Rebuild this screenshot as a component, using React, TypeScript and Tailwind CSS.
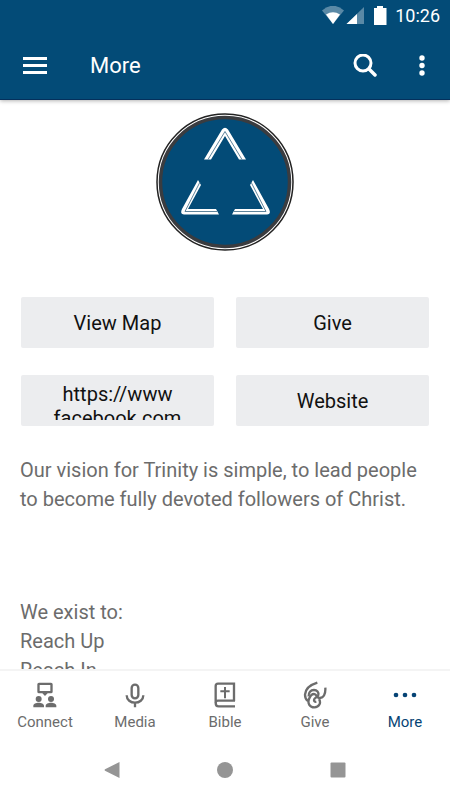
import type { ReactNode } from 'react';
import clsx from 'clsx';

interface NavItem {
  label: string;
  icon: ReactNode;
  active?: boolean;
}

const navItems: NavItem[] = [
  { label: 'Connect', icon: <ConnectIcon /> },
  { label: 'Media', icon: <MicIcon /> },
  { label: 'Bible', icon: <BibleIcon /> },
  { label: 'Give', icon: <GiveIcon /> },
  { label: 'More', icon: <DotsIcon />, active: true },
];

const links = ['View Map', 'Give', 'https://www facebook.com', 'Website'];

function ConnectIcon() {
  return (
    <svg className="h-7 w-6" viewBox="0 0 72 84" fill="currentColor">
      <path
        fillRule="evenodd"
        d="M18 5h36a5 5 0 0 1 5 5v22a5 5 0 0 1-5 5H44l-8 8-8-8H18a5 5 0 0 1-5-5V10a5 5 0 0 1 5-5zm2 7v18h32V12z"
      />
      <circle cx="17" cy="54" r="9" />
      <circle cx="54" cy="54" r="9" />
      <path d="M1 79v-5c0-6 8-9 16-9s16 3 16 9v5zM38 79v-5c0-6 8-9 16-9s16 3 16 9v5z" />
    </svg>
  );
}

function MicIcon() {
  return (
    <svg className="h-7 w-6" viewBox="0 0 72 84" fill="none" stroke="currentColor" strokeWidth="7">
      <rect x="26" y="11" width="20" height="41" rx="10" />
      <path d="M11 43c0 14 12 22 25 22s25-8 25-22M36 65v14" />
    </svg>
  );
}

function BibleIcon() {
  return (
    <svg className="h-7 w-6" viewBox="0 0 72 84" fill="none" stroke="currentColor" strokeWidth="7">
      <path d="M66 59H15a7 7 0 0 0-7 7V15a7 7 0 0 1 7-7h48v52" />
      <path d="M8 65c0 7 3 11 9 11h49" />
      <path d="M36 18v34M22 31h28" strokeWidth="6" />
    </svg>
  );
}

function GiveIcon() {
  return (
    <svg className="h-7 w-6" viewBox="0 0 72 84" fill="none" stroke="currentColor" strokeWidth="7">
      <path d="M43 5C20 12 7 25 6 41c0 9 3 15 9 19" />
      <path d="M67 20c1 17-3 29-16 31-10 1-9-12-18-12-8 0-12 7-15 15-5 13 2 25 16 25 15 0 21-14 14-25" />
      <path d="M17 46c-1-12 6-19 16-19 9 0 15 7 13 15-2 8-13 8-13 15 0 5 3 6 7 5" />
    </svg>
  );
}

function DotsIcon() {
  return (
    <svg className="h-7 w-6" viewBox="0 0 72 84" fill="currentColor">
      <circle cx="9" cy="42" r="7" />
      <circle cx="36" cy="42" r="7" />
      <circle cx="63" cy="42" r="7" />
    </svg>
  );
}

function StatusBar() {
  return (
    <div className="flex h-8 items-center justify-end pr-[10px] text-white">
      <svg className="h-5 w-[66px]" viewBox="0 0 66 20" fill="currentColor">
        <path d="M1 4.500Q12-5 23 4.500L12 18z" opacity=".35" />
        <path d="M5 8.500Q12 4 19 8.500L12 18z" />
        <path d="M43 1v17H25.500z" opacity=".35" />
        <path d="M36 8v10H25.500z" />
        <path d="M56 0h6v2h3.500v17H53V2h3z" />
      </svg>
      <span className="ml-2 text-lg leading-5">10:26</span>
    </div>
  );
}

function Logo() {
  return (
    <svg className="size-[138px]" viewBox="0 0 138 138" fill="none" role="img" aria-label="Trinity">
      <circle cx="69" cy="69" r="68" fill="#fff" stroke="#222" strokeWidth="1.500" />
      <circle cx="69" cy="69" r="64.500" fill="#034b77" stroke="#3a3c40" strokeWidth="3.500" />
      <g fill="#fff">
        <path d="M48 46.500 66 16.500Q69 13 72 16.500L90 46.500H83L69 23 55 46.500z" />
        <path d="M42 67 45 72 32 96H60L63 101.500H28Q23.500 101 26 96z" />
        <path d="M97 67 94 72 107 96H79L76 101.500H111Q115.500 101 113 96z" />
      </g>
      <g stroke="#4d7690" strokeWidth=".9">
        <path d="M52 46.500 69 18.500 86 46.500M44 69 29 98.500H61M95 69 110 98.500H78" />
      </g>
    </svg>
  );
}

export default function App() {
  return (
    <div className="flex h-screen flex-col overflow-hidden bg-white font-[Roboto,sans-serif]">
      <header className="relative z-10 h-[100px] shrink-0 border-b border-[#04305c] bg-[#034b77] text-white shadow-[0_1px_4px_rgba(0,0,0,0.3)]">
        <StatusBar />
        <div className="flex h-[67px] items-center pr-[15px] pl-[23px]">
          <button type="button" aria-label="Open menu">
            <svg className="h-5 w-6" viewBox="0 0 24 20" fill="currentColor">
              <path d="M0 1h24v3H0zM0 8h24v3H0zM0 15h24v3H0z" />
            </svg>
          </button>
          <h1 className="ml-[43px] flex-1 text-[22px] leading-7">More</h1>
          <button type="button" aria-label="Search">
            <svg className="size-6" viewBox="0 0 24 24" fill="none" stroke="currentColor" strokeWidth="3">
              <circle cx="10" cy="9" r="8" />
              <path d="m16 15 6 6" strokeWidth="3.500" strokeLinecap="round" />
            </svg>
          </button>
          <button type="button" aria-label="More options" className="ml-[38px]">
            <svg className="h-6 w-5" viewBox="0 0 20 24" fill="currentColor">
              <circle cx="7" cy="4" r="2.700" />
              <circle cx="7" cy="11.500" r="2.700" />
              <circle cx="7" cy="19" r="2.700" />
            </svg>
          </button>
        </div>
      </header>

      <main className="min-h-0 flex-1 overflow-hidden">
        <div className="flex justify-center pt-[13px]">
          <Logo />
        </div>
        <div className="mt-[46px] grid grid-cols-2 gap-x-[22px] gap-y-[27px] px-[21px]">
          {links.map((label) => (
            <button
              key={label}
              type="button"
              className="flex h-[51px] flex-col rounded-xs bg-[#ecedef] px-6 py-[5px] text-center text-xl leading-6 text-[#111]"
            >
              <span className={clsx('block w-full overflow-hidden', label.length > 12 ? 'h-10 pt-[2px]' : 'my-auto')}>
                {label}
              </span>
            </button>
          ))}
        </div>
        <div className="px-5 pt-[30px] text-xl leading-[29px] text-[#6c6c6c]">
          <p>Our vision for Trinity is simple, to lead people to become fully devoted followers of Christ.</p>
          <p className="mt-[84px]">
            We exist to:
            <br />
            Reach Up
            <br />
            Reach In
          </p>
        </div>
      </main>

      <nav className="grid h-[70px] shrink-0 grid-cols-5 border-t-2 border-[#f4f4f4] bg-white">
        {navItems.map(({ label, icon, active }) => (
          <button
            key={label}
            type="button"
            aria-current={active ? 'page' : undefined}
            className={clsx(
              'flex flex-col items-center pt-[10px] text-[15px] leading-5',
              active ? 'text-[#064475]' : 'text-[#6c6c6c]'
            )}
          >
            {icon}
            <span className="mt-[3px]">{label}</span>
          </button>
        ))}
      </nav>

      {/* System navigation */}
      <div className="grid h-[61px] shrink-0 grid-cols-3 items-center px-14 text-[#959595]">
        <button type="button" aria-label="Back" className="flex justify-center">
          <svg className="size-4" viewBox="0 0 16 16" fill="currentColor">
            <path d="M15.500 0v16L1 8.700Q0 8 1 7.300z" />
          </svg>
        </button>
        <button type="button" aria-label="Home" className="flex justify-center">
          <svg className="size-4" viewBox="0 0 16 16" fill="currentColor">
            <circle cx="8" cy="8" r="8" />
          </svg>
        </button>
        <button type="button" aria-label="Recent apps" className="flex justify-center">
          <svg className="size-4" viewBox="0 0 16 16" fill="currentColor">
            <rect x="0.500" y="0.500" width="15" height="15" rx="1" />
          </svg>
        </button>
      </div>
    </div>
  );
}
